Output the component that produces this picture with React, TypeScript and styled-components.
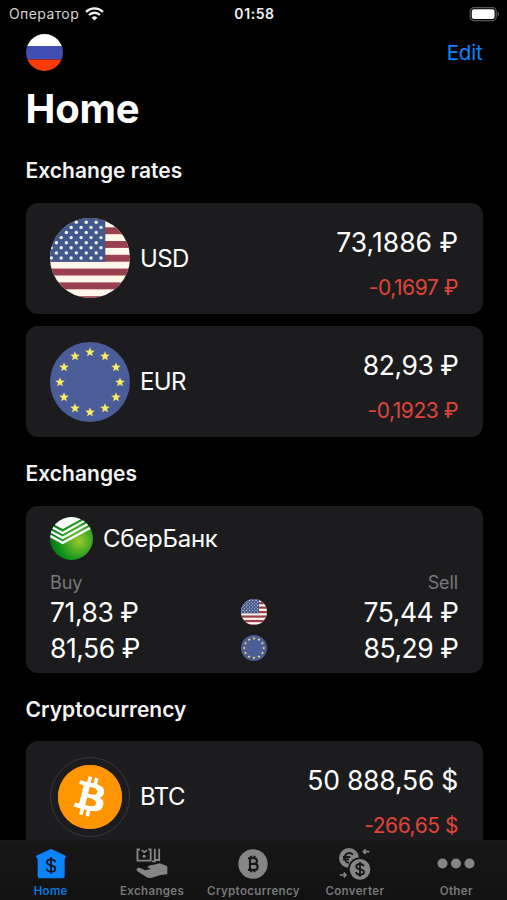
import React, { useId } from 'react';
import styled, { createGlobalStyle } from 'styled-components';
import { SiBitcoin } from 'react-icons/si';

const GlobalStyle = createGlobalStyle`
  * { box-sizing: border-box; }
  body { margin: 0; background: #000; }
  svg { display: block; flex: none; }
`;

const Screen = styled.div`
  width: 507px;
  height: 900px;
  display: flex;
  flex-direction: column;
  overflow: hidden;
  background: #000;
  color: #fff;
  font-family: Inter, 'Liberation Sans', sans-serif;
`;

const StatusBar = styled.header`
  height: 28px;
  flex: none;
  display: grid;
  grid-template-columns: 1fr auto 1fr;
  align-items: center;
  padding: 0 7px 0 9px;
  font-size: 14px;
  line-height: 28px;
`;

const Carrier = styled.div`
  display: flex;
  align-items: center;
  gap: 6px;
  color: #d4d4d4;
  letter-spacing: 0.4px;
`;

const Clock = styled.div`
  font-weight: 600;
  letter-spacing: 0.6px;
  color: #f0f0f0;
`;

const Battery = styled.div`
  display: flex;
  justify-content: flex-end;
`;

const Content = styled.main`
  flex: 1;
  min-height: 0;
  overflow: hidden;
  padding: 0 24.5px 0 25.5px;
`;

const NavRow = styled.div`
  height: 48px;
  display: flex;
  align-items: center;
  justify-content: space-between;
`;

const EditButton = styled.button`
  border: 0;
  padding: 0;
  background: none;
  color: #0a84ff;
  font: 400 20.5px Inter, sans-serif;
  letter-spacing: -0.2px;
`;

const Title = styled.h1`
  margin: 0;
  height: 66px;
  font-size: 40px;
  line-height: 66px;
  font-weight: 700;
  letter-spacing: -0.2px;
`;

const Heading = styled.h2<{ $first?: boolean }>`
  margin: 0;
  height: ${p => (p.$first ? 60.5 : 68.5)}px;
  padding-top: ${p => (p.$first ? 1 : 5)}px;
  line-height: ${p => (p.$first ? 56 : 63.5)}px;
  font-size: 21px;
  font-weight: 600;
  letter-spacing: 0.03px;
  color: #f4f4f4;
`;

const CardList = styled.div`
  display: flex;
  flex-direction: column;
  gap: 12.5px;
`;

const Card = styled.section`
  background: #1c1c1e;
  border-radius: 12px;
  padding: 0 24.5px;
`;

const RateCard = styled(Card)`
  height: 111px;
  display: flex;
  align-items: center;
  gap: 10px;
`;

const Code = styled.span`
  font-size: 24px;
  letter-spacing: -0.6px;
`;

const Figures = styled.div`
  margin-left: auto;
  padding-top: 13px;
  display: flex;
  flex-direction: column;
  align-items: flex-end;
  gap: 12px;
`;

const Price = styled.div<{ $spacing?: number }>`
  font-size: 26.5px;
  line-height: 34px;
  white-space: nowrap;
  letter-spacing: ${p => p.$spacing ?? -0.45}px;
  margin-right: ${p => p.$spacing ?? -0.45}px;
`;

const Change = styled.div`
  font-size: 21px;
  line-height: 34px;
  white-space: nowrap;
  letter-spacing: -0.45px;
  color: #e0443a;
`;

const BankCard = styled(Card)`
  height: 167px;
  padding-top: 11.5px;
`;

const BankHeader = styled.div`
  height: 43px;
  display: flex;
  align-items: center;
  gap: 10px;
  font-size: 24px;
  letter-spacing: -0.25px;
`;

const Captions = styled.div`
  height: 33.5px;
  padding-top: 12px;
  display: flex;
  justify-content: space-between;
  font-size: 18px;
  line-height: 22px;
  letter-spacing: -0.1px;
  color: #78787b;
`;

const QuoteRow = styled.div`
  height: 36.5px;
  display: grid;
  grid-template-columns: 1fr auto 1fr;
  align-items: center;
`;

const Sell = styled.div`
  display: flex;
  justify-content: flex-end;
`;

const TabBar = styled.nav`
  height: 60px;
  flex: none;
  display: grid;
  grid-template-columns: repeat(5, 1fr);
  background: linear-gradient(#171718, #121212);
  border-top: 1px solid #1b1b1d;
`;

const Tab = styled.a<{ $active?: boolean }>`
  display: flex;
  flex-direction: column;
  align-items: center;
  color: ${p => (p.$active ? '#0a84ff' : '#858585')};
`;

const TabIcon = styled.div`
  height: 43px;
  padding-top: 2px;
  display: flex;
  align-items: center;
`;

const TabLabel = styled.span<{ $active?: boolean }>`
  font-size: 11.5px;
  line-height: 15px;
  font-weight: 600;
  letter-spacing: 0.35px;
  color: ${p => (p.$active ? '#0a76e2' : '#787878')};
`;

const WifiIcon = () => (
  <svg width="19" height="14" viewBox="0 0 19 14" fill="none" stroke="#f2f2f2" strokeWidth="2.4">
    <path d="M1 4.8a12.2 12.2 0 0 1 17 0" />
    <path d="M4 8a8 8 0 0 1 11 0" />
    <path d="M9.5 13.6 6.6 10.7a4.2 4.2 0 0 1 5.8 0Z" fill="#f2f2f2" stroke="none" />
  </svg>
);

const BatteryIcon = () => (
  <svg width="31" height="15" viewBox="0 0 31 15">
    <rect x="1.2" y="0.6" width="26" height="13" rx="3.8" fill="none" stroke="#58585a" strokeWidth="1.2" />
    <rect x="2.8" y="2.2" width="22.8" height="9.8" rx="2.2" fill="#fff" />
    <path d="M28.6 4.8v4.6c1.9-.7 1.9-3.9 0-4.6Z" fill="#58585a" />
  </svg>
);

const RussianFlag = () => {
  const id = useId();
  return (
    <svg width="37" height="37" viewBox="0 0 37 37">
      <clipPath id={id}><circle cx="18.5" cy="18.5" r="18.5" /></clipPath>
      <g clipPath={`url(#${id})`}>
        <path fill="#fff" d="M0 0h37v12H0z" />
        <path fill="#414fb5" d="M0 12h37v13.5H0z" />
        <path fill="#fb3b07" d="M0 25.5h37V37H0z" />
      </g>
    </svg>
  );
};

const flagStars: [number, number][] = [];
for (let row = 0; row < 8; row++) {
  for (let col = 0; col < 6; col++) {
    flagStars.push([(row % 2 ? 51 : 46.2) - col * 9.95, 4.3 + row * 5.1]);
  }
}

const UsFlag = ({ size }: { size: number }) => {
  const id = useId();
  return (
    <svg width={size} height={size} viewBox="0 0 80 80">
      <clipPath id={id}><circle cx="40" cy="40" r="40" /></clipPath>
      <g clipPath={`url(#${id})`}>
        <path fill="#fef6e8" d="M0 0h80v80H0z" />
        {[-4.5, 9.3, 23, 36.8, 50.6, 64.4, 78.2].map(y => (
          <rect key={y} y={y} width="80" height="6.9" fill="#99404f" />
        ))}
        <path fill="#41588e" d="M0 0h55.3v43.7H0z" />
        {flagStars.map(([x, y]) => (
          <circle key={`${x}-${y}`} cx={x} cy={y} r="1.7" fill="#f3f0ec" />
        ))}
      </g>
    </svg>
  );
};

const starPoints = Array.from({ length: 10 }, (_, i) => {
  const r = i % 2 ? 2.1 : 5;
  const a = (Math.PI * i) / 5;
  return `${(r * Math.sin(a)).toFixed(2)},${(-r * Math.cos(a)).toFixed(2)}`;
}).join(' ');

const EuFlag = ({ size }: { size: number }) => (
  <svg width={size} height={size} viewBox="0 0 80 80">
    <circle cx="40" cy="40" r="40" fill="#4a5d99" />
    {Array.from({ length: 12 }, (_, i) => {
      const a = (Math.PI * i) / 6;
      return (
        <polygon
          key={i}
          points={starPoints}
          fill="#faec64"
          transform={`translate(${40 + 30 * Math.sin(a)} ${40.3 - 30 * Math.cos(a)})`}
        />
      );
    })}
  </svg>
);

const SberLogo = () => {
  const id = useId();
  return (
    <svg width="43" height="43" viewBox="0 0 43 43">
      <defs>
        <radialGradient id={`${id}g`} cx="0.68" cy="0.56" r="0.62">
          <stop offset="0" stopColor="#9acb2c" />
          <stop offset="0.4" stopColor="#4fae25" />
          <stop offset="0.75" stopColor="#12951d" />
          <stop offset="1" stopColor="#087a14" />
        </radialGradient>
        <clipPath id={`${id}c`}><circle cx="21.5" cy="21.5" r="21.5" /></clipPath>
      </defs>
      <g clipPath={`url(#${id}c)`}>
        <path fill={`url(#${id}g)`} d="M0 0h43v43H0z" />
        <path fill="#fff" d="M-2 4.5 12.7 12 34 .4V-2H-2z" />
        <g fill="none" stroke="#fff" strokeWidth="2.4">
          <path d="M-1 8.7 12.7 16 34.5 3.8" />
          <path d="M-1 13.6 12.7 20.9 37.5 7.2" />
          <path d="M0 18.9 12.7 25.8 40 11" />
        </g>
      </g>
    </svg>
  );
};

const CoinRing = styled.div`
  width: 80px;
  height: 80px;
  flex: none;
  border: 1px solid #38383a;
  border-radius: 50%;
  display: flex;
  align-items: center;
  justify-content: center;
`;

const CoinFace = styled.div`
  width: 64px;
  height: 64px;
  border-radius: 50%;
  background: radial-gradient(circle closest-side, #fff 80%, #ff9500 82%);
`;

const HomeIcon = () => (
  <svg width="32" height="32" viewBox="107 35 96 96">
    <path fill="currentColor" stroke="currentColor" strokeWidth="4" strokeLinejoin="round" d="M155 40 198 60 194 69V120q0 4-4 4H121q-4 0-4-4V69L112 60Z" />
    <path fill="none" stroke="#161617" strokeWidth="5.5" d="M168 77c-2-6-7-8-13-8-7 0-12 3-12 9 0 13 25 6 25 19 0 6-5 9-13 9-7 0-12-3-13-9M155 62v50" />
  </svg>
);

const ExchangesIcon = () => (
  <svg width="34" height="32" viewBox="12 12 100 96">
    <g fill="none" stroke="currentColor" strokeWidth="5.5">
      <path d="M26 16.5H18.500V50H58V16.500H51" />
      <path d="M62 52H70.500V14M73 48H83.500V14" />
      <path d="M32 18q7 12 14 0" />
    </g>
    <circle cx="38.500" cy="37" r="4.500" fill="currentColor" />
    <path
      fill="currentColor"
      d="M16 76Q20 69 28 73L42 79 58 75Q56 71 48 71 52 62 64 63L86 58 108 67V91L88 93 62 101Q53 104 46 100L18 82Q14 79 16 76Z"
    />
  </svg>
);

const BitcoinTabIcon = () => (
  <svg width="30" height="30" viewBox="0 0 30 30">
    <circle cx="15" cy="15" r="14.7" fill="currentColor" />
    <path
      fill="none"
      stroke="#161617"
      strokeWidth="2.1"
      d="M10 9.2h6.1a2.8 2.8 0 0 1 0 5.7H12h4.6a3 3 0 0 1 0 6H10M12 9.2v11.7M13.2 6.8v2.4M16.4 6.8v2.4M13.2 20.9v2.4M16.4 20.9v2.4"
    />
  </svg>
);

const ConverterIcon = () => (
  <svg width="33" height="34" viewBox="414 34 99 102">
    <circle cx="447" cy="67" r="30" fill="currentColor" />
    <path fill="none" stroke="#161617" strokeWidth="5.5" d="M459 57c-11-10-25-3-25 10 0 8 6 14 13 14M429 64h22M429 71h18" />
    <circle cx="480" cy="101" r="36" fill="#161617" />
    <circle cx="480" cy="101" r="31" fill="currentColor" />
    <path fill="none" stroke="#161617" strokeWidth="5.5" d="M491 92c-2-6-6-7-11-7-7 0-11 3-11 8 0 11 23 5 23 16 0 6-5 8-12 8-6 0-11-2-12-8M480 79v44" />
    <path fill="none" stroke="currentColor" strokeWidth="5" d="M508 48H490M497 41l-7 7 7 7M419 118H438M431 111l7 7-7 7" />
  </svg>
);

const OtherIcon = () => (
  <svg width="38" height="11" viewBox="0 0 38 11" fill="currentColor">
    <circle cx="5.5" cy="5.5" r="5" />
    <circle cx="19" cy="5.5" r="5" />
    <circle cx="32.5" cy="5.5" r="5" />
  </svg>
);

const tabs = [
  { label: 'Home', icon: <HomeIcon />, active: true },
  { label: 'Exchanges', icon: <ExchangesIcon /> },
  { label: 'Cryptocurrency', icon: <BitcoinTabIcon /> },
  { label: 'Converter', icon: <ConverterIcon /> },
  { label: 'Other', icon: <OtherIcon /> },
];

export default function App() {
  return (
    <Screen>
      <GlobalStyle />
      <StatusBar>
        <Carrier>Оператор<WifiIcon /></Carrier>
        <Clock>01:58</Clock>
        <Battery><BatteryIcon /></Battery>
      </StatusBar>
      <Content>
        <NavRow>
          <RussianFlag />
          <EditButton>Edit</EditButton>
        </NavRow>
        <Title>Home</Title>
        <Heading $first>Exchange rates</Heading>
        <CardList>
          <RateCard>
            <UsFlag size={80} />
            <Code>USD</Code>
            <Figures>
              <Price $spacing={0}>73,1886 ₽</Price>
              <Change>-0,1697 ₽</Change>
            </Figures>
          </RateCard>
          <RateCard>
            <EuFlag size={80} />
            <Code>EUR</Code>
            <Figures>
              <Price>82,93 ₽</Price>
              <Change>-0,1923 ₽</Change>
            </Figures>
          </RateCard>
        </CardList>
        <Heading>Exchanges</Heading>
        <BankCard>
          <BankHeader><SberLogo />СберБанк</BankHeader>
          <Captions><span>Buy</span><span>Sell</span></Captions>
          <QuoteRow>
            <Price>71,83 ₽</Price>
            <UsFlag size={26} />
            <Sell><Price>75,44 ₽</Price></Sell>
          </QuoteRow>
          <QuoteRow>
            <Price>81,56 ₽</Price>
            <EuFlag size={26} />
            <Sell><Price>85,29 ₽</Price></Sell>
          </QuoteRow>
        </BankCard>
        <Heading>Cryptocurrency</Heading>
        <RateCard>
          <CoinRing><CoinFace><SiBitcoin size={64} color="#ff9500" /></CoinFace></CoinRing>
          <Code>BTC</Code>
          <Figures>
            <Price $spacing={-0.2}>50 888,56 $</Price>
            <Change>-266,65 $</Change>
          </Figures>
        </RateCard>
      </Content>
      <TabBar>
        {tabs.map(tab => (
          <Tab key={tab.label} $active={tab.active}>
            <TabIcon>{tab.icon}</TabIcon>
            <TabLabel $active={tab.active}>{tab.label}</TabLabel>
          </Tab>
        ))}
      </TabBar>
    </Screen>
  );
}
